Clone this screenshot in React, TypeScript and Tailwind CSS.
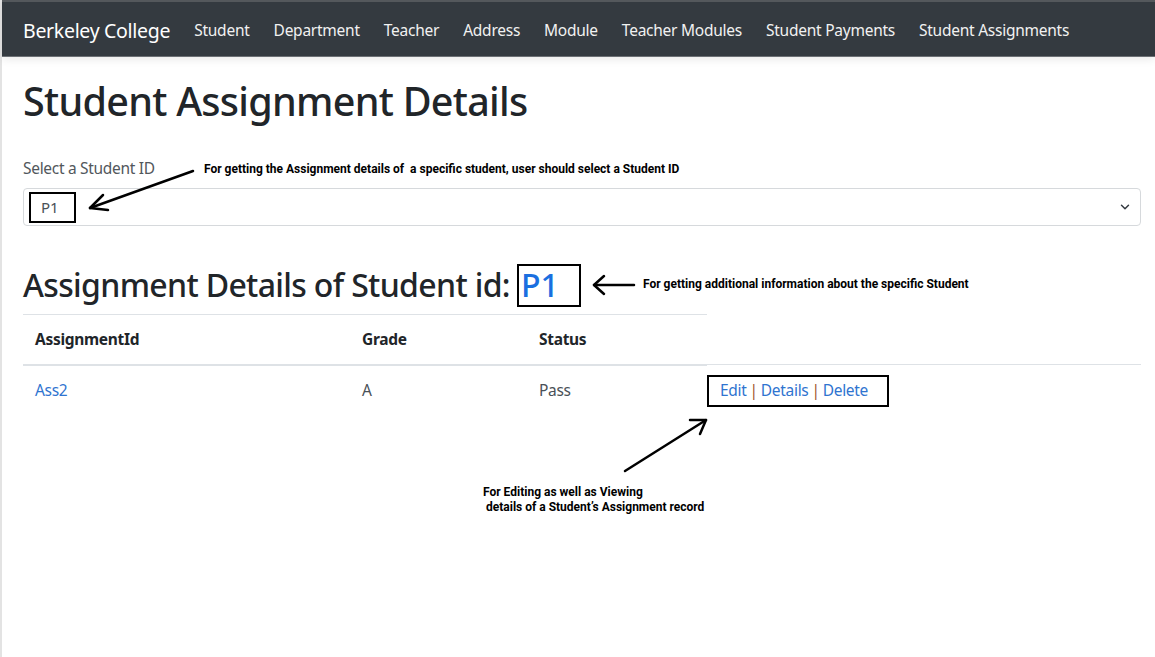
import { ChevronDown } from 'lucide-react';

const navLinks = [
  'Student',
  'Department',
  'Teacher',
  'Address',
  'Module',
  'Teacher Modules',
  'Student Payments',
  'Student Assignments',
];

const note = "font-['Roboto',sans-serif] font-bold text-[12px] text-black whitespace-pre";

export default function App() {
  return (
    <div className="min-h-[657px] bg-white font-['Noto_Sans','Open_Sans',sans-serif] text-[#212529] border-l-2 border-[#e3e3e3]">
      {/* Navbar */}
      <nav className="h-[57px] bg-[#343a40] border-t-2 border-[#54585c] border-b border-b-[#6c7075] flex items-center pt-[3px] pl-[21px] shadow-[0_3px_8px_rgba(0,0,0,0.08)]">
        <span className="text-[19.5px] text-white mr-[24px] tracking-[-0.3px]">Berkeley College</span>
        <div className="flex gap-[24px]">
          {navLinks.map((l) => (
            <span key={l} className="text-[15.5px] text-[#f1f1f1] tracking-[-0.25px]">
              {l}
            </span>
          ))}
        </div>
      </nav>

      <main className="relative pl-[21px] pr-[14px]">
        <h1 className="pt-[20px] text-[39.5px] leading-[48px] font-medium tracking-[-0.72px] text-[#212529]">
          Student Assignment Details
        </h1>

        {/* Select */}
        <div className="mt-[31px]">
          <label className="block text-[15.5px] leading-[24px] text-[#52575c] tracking-[-0.3px]">
            Select a Student ID
          </label>
          <div className="mt-[8px] h-[38px] rounded-[4px] border border-[#d6d9dc] flex items-center justify-between pl-[5px] pr-[8px]">
            <div className="border-2 border-black w-[47px] h-[31px] flex items-center pl-[10px] text-[15px] text-[#495057]">
              P1
            </div>
            <ChevronDown className="w-[14px] h-[14px] text-[#343a40]" strokeWidth={2.5} />
          </div>
        </div>

        {/* Heading 2 */}
        <div className="mt-[37px] flex items-center h-[44px]">
          <h2 className="text-[32px] leading-[38px] font-medium tracking-[-0.66px] text-[#212529]">
            Assignment Details of Student id:
          </h2>
          <div className="ml-[7px] border-2 border-black w-[64px] h-[43px] flex items-center pl-[2px]">
            <span className="text-[32px] leading-[38px] font-medium text-[#1a6fe0]">P1</span>
          </div>
        </div>

        {/* Table */}
        <table className="mt-[7px] w-full border-collapse text-[15.5px] tracking-[-0.3px]">
          <thead>
            <tr>
              <th className="w-[327px] text-left font-bold px-[12px] h-[50px] border-t border-[#dee2e6] border-b-2 border-b-[#dee2e6]">
                AssignmentId
              </th>
              <th className="w-[177px] text-left font-bold px-[12px] border-t border-[#dee2e6] border-b-2 border-b-[#dee2e6]">
                Grade
              </th>
              <th className="w-[180px] text-left font-bold px-[12px] border-t border-[#dee2e6] border-b-2 border-b-[#dee2e6]">
                Status
              </th>
              <th className="border-b border-[#dee2e6]"></th>
            </tr>
          </thead>
          <tbody>
            <tr>
              <td className="px-[12px] h-[52px] text-[#2f74d0]">Ass2</td>
              <td className="px-[12px] text-[#495057]">A</td>
              <td className="px-[12px] text-[#495057]">Pass</td>
              <td className="pl-0">
                <div className="border-2 border-black w-[182px] h-[32px] flex items-center pl-[11px] text-[#2f74d0]">
                  Edit<span className="text-[#a0522d] mx-[3px]">|</span>Details
                  <span className="text-[#a0522d] mx-[3px]">|</span>Delete
                </div>
              </td>
            </tr>
          </tbody>
        </table>

        {/* Annotations */}
        <div className={`absolute left-[202px] top-[103px] ${note}`}>
          For getting the Assignment details of  a specific student, user should select a Student ID
        </div>
        <div className={`absolute left-[641px] top-[218px] ${note}`}>
          For getting additional information about the specific Student
        </div>
        <div className={`absolute left-[481px] top-[428px] leading-[15px] ${note}`}>
          {'For Editing as well as Viewing\n details of a Student\u2019s Assignment record'}
        </div>

        <svg className="absolute left-0 top-0 pointer-events-none" width="1155" height="560" viewBox="-2 57 1155 560">
          <g stroke="black" strokeWidth="2.5" fill="none" strokeLinecap="round" strokeLinejoin="round">
            <line x1="189" y1="171" x2="86" y2="208" />
            <polyline points="99,195 86,208 104,210" />
            <line x1="630" y1="285" x2="590" y2="285" />
            <polyline points="600,276 590,285 600,294" />
            <line x1="621" y1="471" x2="702" y2="420" />
            <polyline points="686,420 702,420 696,434" />
          </g>
        </svg>
      </main>
    </div>
  );
}
